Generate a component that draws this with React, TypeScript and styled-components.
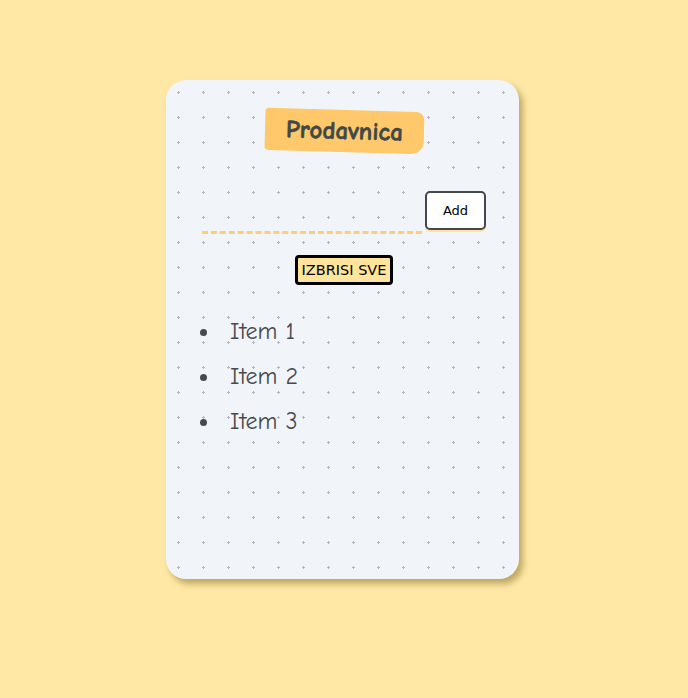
import React, { FC, useState } from 'react';
import styled, { createGlobalStyle } from 'styled-components';

const GlobalStyle = createGlobalStyle`
  html, body {
    margin: 0;
    padding: 0;
    background: #ffe8a5;
  }
`;

const Page = styled.div`
  width: 688px;
  height: 698px;
  padding: 80px 0 0 166px;
  box-sizing: border-box;
  display: flex;
`;

const Card = styled.div`
  width: 353px;
  height: 499px;
  box-sizing: border-box;
  border-radius: 20px;
  background-color: #f1f5f9;
  background-image: radial-gradient(circle, #b3b6ba 1px, transparent 1.3px);
  background-size: 25px 25px;
  background-position: 0 0;
  box-shadow: 4px 5px 6px rgba(110, 90, 20, 0.45);
  padding: 30px 33px 0 36px;
  display: flex;
  flex-direction: column;
  align-items: center;
`;

const Title = styled.h1`
  margin: 0;
  font-family: 'Comic Sans MS', 'Comic Neue', cursive;
  font-size: 25px;
  font-weight: bold;
  -webkit-text-stroke: 0.6px #3f4848;
  color: #3f4848;
  background: #ffc96b;
  padding: 6px 21px 7px;
  border-radius: 3px 8px 12px 4px;
  transform: rotate(1.6deg);
`;

const InputRow = styled.div`
  align-self: stretch;
  margin-top: 39px;
  display: flex;
  align-items: flex-end;
  gap: 3px;
`;

const TextInput = styled.input`
  flex: 1;
  min-width: 0;
  height: 30px;
  border: none;
  border-bottom: 3px dashed #ffcd78;
  background: transparent;
  outline: none;
  font-family: 'Comic Sans MS', cursive;
  font-size: 16px;
  margin-bottom: -4px;
`;

const AddButton = styled.button`
  width: 61px;
  height: 39px;
  box-sizing: border-box;
  border: 2px solid #45484b;
  border-radius: 5px;
  background: #fff;
  color: #000;
  font-family: 'DejaVu Sans', sans-serif;
  font-size: 13px;
  box-shadow: 0 2px 0 #ffe2a6;
`;

const ClearButton = styled.button`
  margin-top: 25px;
  height: 30px;
  padding: 0 4px;
  box-sizing: border-box;
  border: 3px solid #000;
  border-radius: 4px;
  background: #ffe49b;
  color: #000;
  font-family: 'DejaVu Sans', sans-serif;
  font-size: 14.5px;
`;

const List = styled.ul`
  align-self: stretch;
  margin: 31px 0 0;
  padding-left: 19px;
  list-style: disc;
  color: #464a4c;
`;

const ListItem = styled.li`
  font-family: 'Comic Sans MS', 'Comic Neue', cursive;
  font-size: 24px;
  height: 45px;
  line-height: 30px;
  padding-left: 9px;
`;

const App: FC = () => {
  const [items] = useState<string[]>(['Item 1', 'Item 2', 'Item 3']);

  return (
    <Page>
      <GlobalStyle />
      <Card>
        <Title>Prodavnica</Title>
        <InputRow>
          <TextInput type="text" />
          <AddButton>Add</AddButton>
        </InputRow>
        <ClearButton>IZBRISI SVE</ClearButton>
        <List>
          {items.map((item) => (
            <ListItem key={item}>{item}</ListItem>
          ))}
        </List>
      </Card>
    </Page>
  );
};

export default App;
